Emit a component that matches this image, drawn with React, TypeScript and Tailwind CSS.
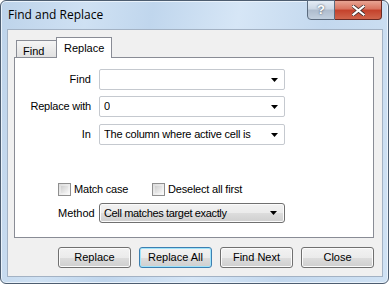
import React, { useState } from "react";

const font = { fontFamily: '"Liberation Sans", Arial, sans-serif' };

const Arrow = () => (
  <svg width="7" height="4" viewBox="0 0 7 4" className="shrink-0">
    <path d="M0 0h7L3.5 4z" fill="#000" />
  </svg>
);

const Combo: React.FC<{ value: string }> = ({ value }) => (
  <div className="w-[186px] h-[21px] flex items-center justify-between pl-[4px] pr-[6px] bg-white border border-[#c5c9cf] rounded-[2px] text-[11px] text-black">
    <span className="truncate tracking-[-0.2px]">{value}</span>
    <Arrow />
  </div>
);

const Check: React.FC<{ label: string; checked: boolean; onToggle: () => void; width?: string }> = ({
  label,
  checked,
  onToggle,
  width,
}) => (
  <label className={`flex items-center gap-[3px] cursor-default ${width ?? ""}`} onClick={onToggle}>
    <span className="w-[13px] h-[13px] border border-[#8f8f8f] bg-gradient-to-br from-[#dcdcdc] to-[#fbfbfb] p-[2px] flex">
      <span className="flex-1 bg-gradient-to-br from-[#cfcfcf] to-[#f5f5f5] flex items-center justify-center text-[9px] leading-none">
        {checked ? "✓" : ""}
      </span>
    </span>
    <span className="text-[11px] text-black tracking-[-0.2px]">{label}</span>
  </label>
);

const Btn: React.FC<{ label: string; focused?: boolean }> = ({ label, focused }) => (
  <button
    className={`w-[73px] h-[21px] rounded-[3px] border text-[11px] text-black bg-[linear-gradient(#f2f2f2_0%,#ebebeb_50%,#dddddd_51%,#cfcfcf_100%)] ${
      focused
        ? "border-[#3c7fb1] shadow-[inset_0_0_0_1px_#9fe4fb]"
        : "border-[#707070] shadow-[inset_0_0_0_1px_#fbfbfb]"
    }`}
  >
    {label}
  </button>
);

export default function App() {
  const [matchCase, setMatchCase] = useState(false);
  const [deselect, setDeselect] = useState(false);

  return (
    <div style={font} className="w-[389px] h-[284px] bg-white">
      <div className="w-[389px] h-[284px] flex flex-col rounded-[6px] border border-[#4d5d70] bg-[linear-gradient(100deg,#bdd3ea_0%,#cfe1f3_20%,#c0d6ed_35%,#d6e6f6_55%,#c3d8ee_75%,#d0e2f4_100%)] shadow-[inset_0_0_0_1px_#e9f2fb] relative">
        {/* title bar */}
        <div className="h-[28px] flex items-center pl-[7px] shrink-0">
          <span className="text-[12px] text-black" style={{ fontFamily: '"Open Sans", "Noto Sans", sans-serif' }}>
            Find and Replace
          </span>
        </div>
        <div className="absolute top-[-1px] right-[6px] flex">
          <div className="w-[28px] h-[20px] rounded-bl-[4px] border border-[#5b6b7e] bg-[linear-gradient(#e4ecf5_0%,#cbd7e4_45%,#aebccd_50%,#c2d0df_100%)] flex items-center justify-center text-[13px] font-bold text-white [text-shadow:0_0_2px_#2b3a4c]">
            ?
          </div>
          <div className="w-[47px] h-[20px] rounded-br-[4px] border border-l-0 border-[#6b2a23] bg-[linear-gradient(#e8a493_0%,#d9735f_45%,#c4412b_50%,#d0654c_100%)] flex items-center justify-center">
            <svg width="13" height="11" viewBox="0 0 13 11">
              <path d="M1.5 1.5l10 8M11.5 1.5l-10 8" stroke="#3a2a2a" strokeWidth="3.6" strokeLinecap="square" />
              <path d="M1.5 1.5l10 8M11.5 1.5l-10 8" stroke="#fff" strokeWidth="2.2" strokeLinecap="square" />
            </svg>
          </div>
        </div>

        {/* client area */}
        <div className="flex-1 ml-[6px] mr-[5px] mb-[6px] border border-[#a3b2c4] bg-[#f0f0f0] flex flex-col">
          <div className="pl-[6px] pr-[8px] pt-[7px]">
            {/* tabs */}
            <div className="flex items-end h-[20px] pl-[2px]">
              <div className="w-[41px] h-[17px] border border-b-0 border-[#898c95] bg-[linear-gradient(#f5f5f5,#e1e1e1)] text-[11px] text-black pl-[6px] pt-[2px]">
                Find
              </div>
              <div className="w-[56px] h-[21px] -ml-px -mb-px relative z-10 border border-b-0 border-[#898c95] bg-white text-[11px] text-black pl-[7px] pt-[2px]">
                Replace
              </div>
            </div>
            {/* panel */}
            <div className="h-[181px] border border-[#898c95] bg-white flex flex-col">
              <div className="flex items-center mt-[11px] h-[21px]">
                <span className="w-[76px] text-right text-[11px] mr-[8px]">Find</span>
                <Combo value="" />
              </div>
              <div className="flex items-center mt-[6px] h-[21px]">
                <span className="w-[76px] text-right text-[11px] mr-[8px] tracking-[-0.2px]">Replace with</span>
                <Combo value="0" />
              </div>
              <div className="flex items-center mt-[7px] h-[21px]">
                <span className="w-[76px] text-right text-[11px] mr-[8px]">In</span>
                <Combo value="The column where active cell is" />
              </div>
              <div className="flex items-center mt-[38px] h-[13px] pl-[43px]">
                <Check label="Match case" checked={matchCase} onToggle={() => setMatchCase((v) => !v)} width="w-[94px]" />
                <Check label="Deselect all first" checked={deselect} onToggle={() => setDeselect((v) => !v)} />
              </div>
              <div className="flex items-center mt-[7px] h-[20px] pl-[43px]">
                <span className="w-[41px] text-[11px]">Method</span>
                <div className="w-[186px] h-[20px] flex items-center justify-between pl-[4px] pr-[7px] rounded-[3px] border border-[#707070] shadow-[inset_0_0_0_1px_#fbfbfb] bg-[linear-gradient(#f2f2f2_0%,#ebebeb_50%,#dddddd_51%,#cfcfcf_100%)] text-[11px] text-black">
                  <span className="tracking-[-0.35px]">Cell matches target exactly</span>
                  <Arrow />
                </div>
              </div>
            </div>
          </div>
          {/* buttons */}
          <div className="flex justify-end gap-[8px] pr-[8px] mt-[9px]">
            <Btn label="Replace" />
            <Btn label="Replace All" focused />
            <Btn label="Find Next" />
            <Btn label="Close" />
          </div>
        </div>
      </div>
    </div>
  );
}
